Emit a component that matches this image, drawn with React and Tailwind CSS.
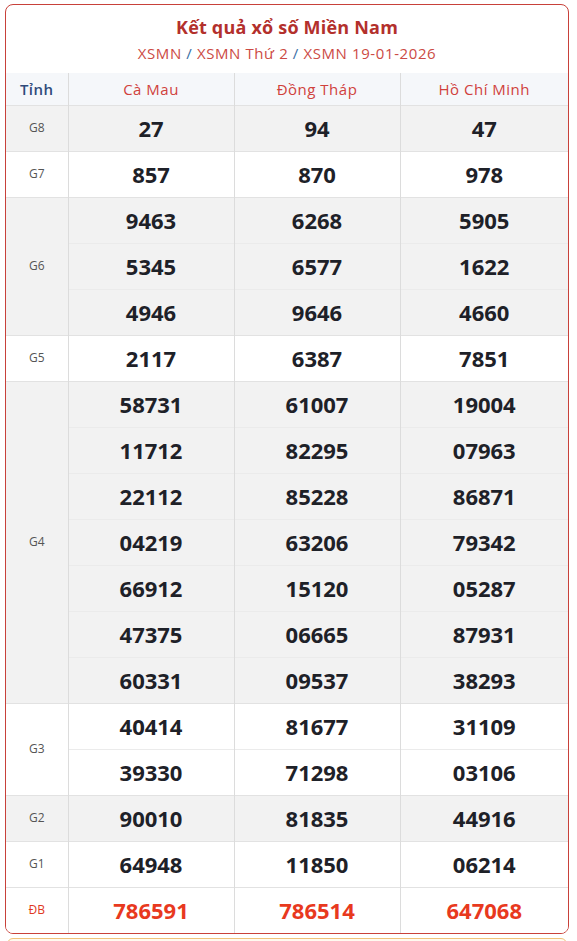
import React from 'react'

const PROVINCES = ['Cà Mau', 'Đồng Tháp', 'Hồ Chí Minh']

// each prize: label + rows of [caMau, dongThap, hcm]
const PRIZES = [
  { label: 'G8', rows: [['27', '94', '47']] },
  { label: 'G7', rows: [['857', '870', '978']] },
  { label: 'G6', rows: [['9463', '6268', '5905'], ['5345', '6577', '1622'], ['4946', '9646', '4660']] },
  { label: 'G5', rows: [['2117', '6387', '7851']] },
  {
    label: 'G4',
    rows: [
      ['58731', '61007', '19004'],
      ['11712', '82295', '07963'],
      ['22112', '85228', '86871'],
      ['04219', '63206', '79342'],
      ['66912', '15120', '05287'],
      ['47375', '06665', '87931'],
      ['60331', '09537', '38293'],
    ],
  },
  { label: 'G3', rows: [['40414', '81677', '31109'], ['39330', '71298', '03106']] },
  { label: 'G2', rows: [['90010', '81835', '44916']] },
  { label: 'G1', rows: [['64948', '11850', '06214']] },
  { label: 'ĐB', rows: [['786591', '786514', '647068']], special: true },
]

export default function App() {
  return (
    <div className="min-h-screen bg-white pt-[4px] px-[5px]" style={{ fontFamily: '"Open Sans", "Noto Sans", sans-serif' }}>
      <div className="w-[564px] border border-[#c8413a] rounded-lg overflow-hidden bg-white">
        {/* Header */}
        <div className="text-center pt-[10px] pb-[9px]">
          <h1 className="text-[18px] leading-[24px] font-bold text-[#b3302c] tracking-[0.2px]">Kết quả xổ số Miền Nam</h1>
          <p className="text-[15px] leading-[22px] mt-[3px] text-[#cc4a44] tracking-[0.6px]">
            XSMN <span className="text-[#3a6ea5]">/</span> XSMN Thứ 2 <span className="text-[#3a6ea5]">/</span> XSMN 19-01-2026
          </p>
        </div>

        <table className="w-full border-collapse table-fixed">
          <colgroup>
            <col className="w-[62px]" />
            <col className="w-[166px]" />
            <col className="w-[166px]" />
            <col />
          </colgroup>
          <thead>
            <tr className="bg-[#f5f7fa] h-[32px] text-[15px] tracking-[0.5px]">
              <th className="font-semibold text-[#2f4a7a] border-r border-[#dcdcdc]">Tỉnh</th>
              {PROVINCES.map((p, i) => (
                <th key={p} className={`font-normal text-[#d0413c] ${i < 2 ? 'border-r border-[#dcdcdc]' : ''}`}>
                  {p}
                </th>
              ))}
            </tr>
          </thead>
          <tbody>
            {PRIZES.map((prize, pi) => {
              const shaded = pi % 2 === 0 && !prize.special
              return prize.rows.map((row, ri) => (
                <tr
                  key={prize.label + ri}
                  className={`h-[46px] ${shaded ? 'bg-[#f2f2f2]' : 'bg-white'} ${
                    ri === 0 ? 'border-t border-[#e2e2e2]' : 'border-t border-[#ebebeb]'
                  }`}
                >
                  {ri === 0 && (
                    <td
                      rowSpan={prize.rows.length}
                      className={`text-center text-[12px] border-r border-[#dcdcdc] ${
                        prize.special ? 'text-[#e0391e]' : 'text-[#555]'
                      }`}
                    >
                      {prize.label}
                    </td>
                  )}
                  {row.map((n, ci) => (
                    <td
                      key={ci}
                      className={`text-center font-bold ${ci < 2 ? 'border-r border-[#dcdcdc]' : ''} ${
                        prize.special ? 'text-[22px] text-[#e8391e]' : 'text-[22px] text-[#1e2128]'
                      }`}
                    >
                      {n}
                    </td>
                  ))}
                </tr>
              ))
            })}
          </tbody>
        </table>
      </div>

      <div className="w-[560px] mx-[2px] mt-[4px] h-[20px] border border-[#f0c27a] rounded-t-md bg-[#fffaf0]" />
    </div>
  )
}
